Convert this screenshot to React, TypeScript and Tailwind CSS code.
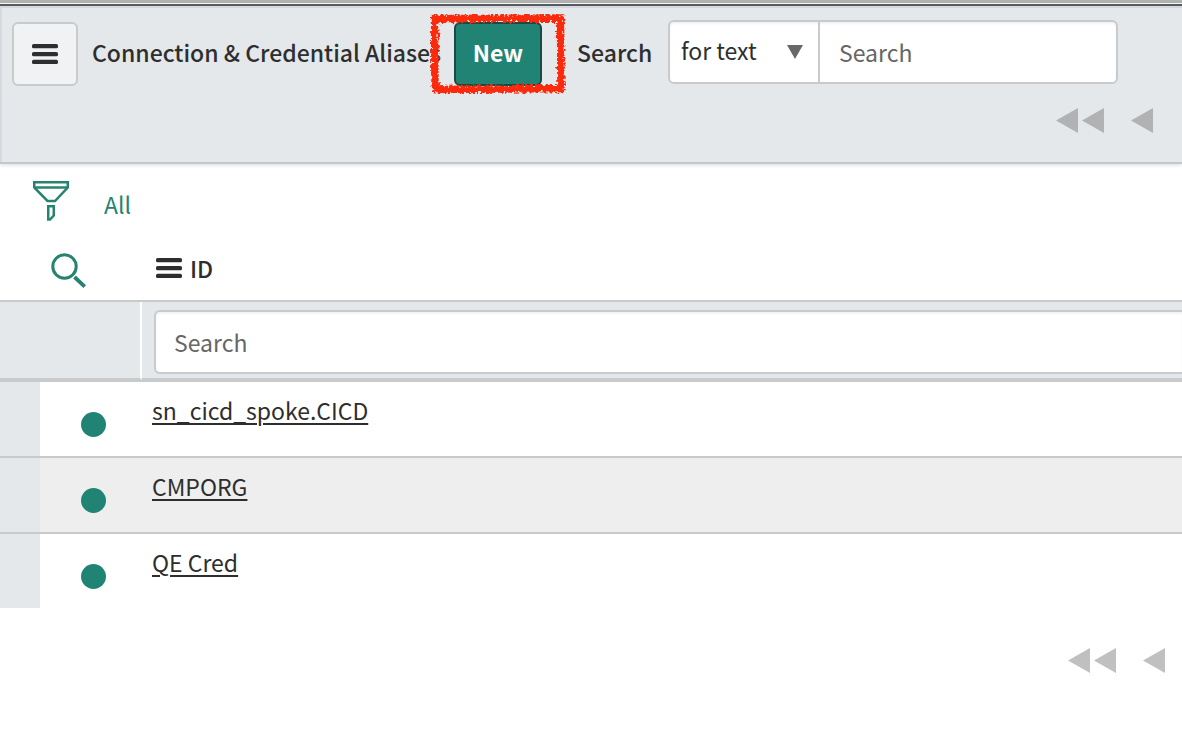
type Alias = { id: string };

const aliases: Alias[] = [{ id: "sn_cicd_spoke.CICD" }, { id: "CMPORG" }, { id: "QE Cred" }];

function Bars() {
  return (
    <svg viewBox="0 0 26 20" className="h-5 w-[26px] shrink-0 fill-[#2e2e2e]" aria-hidden="true">
      <rect width="26" height="4.3" rx="1.6" />
      <rect y="8" width="26" height="4.3" rx="1.6" />
      <rect y="15.7" width="26" height="4.3" rx="1.6" />
    </svg>
  );
}

function FunnelIcon() {
  return (
    <svg viewBox="0 0 36 40" className="h-10 w-9 fill-none stroke-[#278371]" strokeWidth="2.5" aria-hidden="true">
      <path d="M1.25 1.25H34.75V6.5L22 20H14.5L1.25 6.5Z" />
      <path d="M1 6.5H35" />
      <path d="M15.25 25.25H20.75V34.5L17 38.5H15.25Z" />
    </svg>
  );
}

function LensIcon() {
  return (
    <svg viewBox="0 0 36 36" className="h-9 w-9 fill-none stroke-[#278371]" aria-hidden="true">
      <circle cx="13.5" cy="13.5" r="11.7" strokeWidth="3" />
      <path d="M23.5 24L33.7 33.7" strokeWidth="3.8" />
    </svg>
  );
}

function Pager({ className }: { className: string }) {
  return (
    <nav aria-label="Pages" className={`flex justify-end gap-[27px] ${className}`}>
      <button type="button" aria-label="First page" className="h-[25px]">
        <svg viewBox="0 0 48 25" className="h-[25px] w-12 fill-current">
          <path d="M0 12.5L22 0V25ZM26 12.5L48 0V25Z" />
        </svg>
      </button>
      <button type="button" aria-label="Previous page" className="h-[25px]">
        <svg viewBox="0 0 22 25" className="h-[25px] w-[22px] fill-current">
          <path d="M0 12.5L22 0V25Z" />
        </svg>
      </button>
    </nav>
  );
}

function CrayonFrame() {
  return (
    <svg viewBox="0 0 136 82" className="pointer-events-none absolute -left-6 -top-[9px] h-[82px] w-[136px] max-w-none" aria-hidden="true">
      <filter id="crayon" x="-5%" y="-5%" width="110%" height="110%">
        <feTurbulence type="fractalNoise" baseFrequency="0.35" numOctaves="3" seed="4" result="n" />
        <feDisplacementMap in="SourceGraphic" in2="n" scale="8" xChannelSelector="R" yChannelSelector="G" />
      </filter>
      <path d="M4.5 5.5L130.5 5L131 75.5L8 76.5L5 72Z" fill="none" stroke="#fb2b0b" strokeWidth="7.5" filter="url(#crayon)" />
    </svg>
  );
}

export default function App() {
  return (
    <div className="overflow-hidden bg-white font-['Noto_Sans_CJK_SC',sans-serif] text-[23px] leading-8 text-[#2e2e2e]">
      <div className="h-1 border-b border-white bg-[#b2b3b1]" />
      <header className="border-y-2 border-t-[#555a60] border-b-[#c5c8ca] shadow-[0_1px_4px_rgba(0,0,0,0.15)]">
        <div className="h-[156px] border-l-2 border-t-2 border-[#d5d9dd] bg-[#e4e8eb] pl-[10px] pr-[29px]">
          <div className="flex items-start pt-3">
            <button type="button" aria-label="List menu" className="mt-[2px] flex h-16 w-[66px] shrink-0 items-center justify-center rounded-md border-2 border-[#c8cacb] bg-[#f1f2f4]">
              <Bars />
            </button>
            <h1 className="ml-[14px] mt-4 w-[344px] shrink-0 whitespace-nowrap font-medium">Connection &amp; Credential Aliases</h1>
            <div className="relative ml-[18px] mt-[2px] shrink-0">
              <button type="button" className="block h-16 w-[88px] rounded-md border-2 border-[#1a4a43] bg-[#218374] pb-1 font-bold text-white">New</button>
              <CrayonFrame />
            </div>
            <label htmlFor="text-search" className="ml-[35px] mt-4 w-[74px] shrink-0 font-medium">Search</label>
            <div className="ml-[17px] flex h-16 w-[450px] overflow-hidden rounded-md border-2 border-[#c8cacb] bg-white shadow-[inset_0_2px_2px_rgba(0,0,0,0.05)]">
              <div className="relative w-[150px] shrink-0 border-r-2 border-[#c8cacb]">
                <select aria-label="Search field" className="h-14 w-full appearance-none bg-transparent pl-[11px] outline-none">
                  <option>for text</option>
                </select>
                <svg viewBox="0 0 16 14" className="pointer-events-none absolute right-[15px] top-[23px] h-[14px] w-4 fill-[#686868]" aria-hidden="true">
                  <path d="M0 0H16L8 14Z" />
                </svg>
              </div>
              <input id="text-search" type="text" placeholder="Search" className="min-w-0 flex-1 bg-transparent pl-[19px] outline-none placeholder:text-[#666666]" />
            </div>
          </div>
          <Pager className="pt-[22px] text-[#b0b2b3]" />
        </div>
      </header>

      <main>
        <div className="flex h-[72px] items-start pl-[33px] pt-[17px]">
          <button type="button" aria-label="Show filter" className="shrink-0">
            <FunnelIcon />
          </button>
          <a href="#all" className="ml-[35px] mt-[7px] text-[#278371]">All</a>
        </div>

        <table className="w-full table-fixed border-separate border-spacing-0 text-left">
          <colgroup>
            <col className="w-10" />
            <col className="w-[102px]" />
            <col />
          </colgroup>
          <thead>
            <tr className="h-[66px]">
              <th colSpan={2} className="border-b-2 border-[#c8cacb] p-0 pl-[51px] pt-[6px]">
                <button type="button" aria-label="Toggle column search" className="block">
                  <LensIcon />
                </button>
              </th>
              <th scope="col" className="border-b-2 border-[#c8cacb] p-0 pl-[14px] font-medium">
                <span className="flex items-center gap-2">
                  <Bars />
                  ID
                </span>
              </th>
            </tr>
            <tr className="h-[78px] bg-[#e4e8eb]">
              <td colSpan={2} className="border-b-2 border-r-2 border-b-[#c8cacb] border-r-white p-0" />
              <td className="border-b-2 border-[#c8cacb] p-0 pb-1 pl-3 pt-2">
                <input type="text" aria-label="Search ID" placeholder="Search" className="block h-16 w-full rounded-l-md border-2 border-r-0 border-[#c8cacb] bg-white pl-[18px] shadow-[inset_0_2px_2px_rgba(0,0,0,0.05)] outline-none placeholder:text-[#666666]" />
              </td>
            </tr>
          </thead>
          <tbody>
            {aliases.map((alias) => (
              <tr key={alias.id} className="h-[76px] even:bg-[#eeeeee]">
                <td className="border-t-2 border-[#c8cacb] bg-[#e4e8eb] p-0" />
                <td className="border-t-2 border-[#c8cacb] p-0 pl-[41px] pt-[30px] align-top">
                  <span className="block h-[25px] w-[25px] rounded-full bg-[#218374]" />
                </td>
                <td className="border-t-2 border-[#c8cacb] p-0 pl-[10px] pt-3 align-top">
                  <a href={`#${alias.id}`} className="underline decoration-2 underline-offset-[3px]">{alias.id}</a>
                </td>
              </tr>
            ))}
          </tbody>
        </table>

        <Pager className="pr-[17px] pt-10 text-[#c0c0c0]" />
      </main>
    </div>
  );
}
